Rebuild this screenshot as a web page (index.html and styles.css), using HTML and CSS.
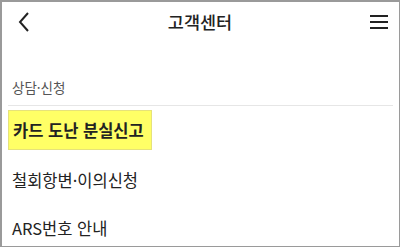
FILE: index.html
```html
<!DOCTYPE html>
<html lang="ko">
<head>
<meta charset="utf-8">
<link rel="stylesheet" href="styles.css">
</head>
<body>
<div class="frame">
  <header class="topbar">
    <svg class="back" width="14" height="22" viewBox="0 0 14 22"><path d="M11 2 L3 11 L11 20" fill="none" stroke="#222" stroke-width="2"/></svg>
    <h1 class="title">고객센터</h1>
    <svg class="menu" width="20" height="16" viewBox="0 0 20 16"><path d="M1 2H19M1 8H19M1 14H19" stroke="#222" stroke-width="2"/></svg>
  </header>
  <div class="section">상담·신청</div>
  <ul class="list">
    <li class="item first"><span class="hl">카드 도난 분실신고</span></li>
    <li class="item">철회항변·이의신청</li>
    <li class="item">ARS번호 안내</li>
  </ul>
</div>
</body>
</html>
```
FILE: styles.css
```css
html, body { margin: 0; padding: 0; background: #fff; }
body { width: 400px; height: 247px; overflow: hidden; font-family: "Noto Sans CJK KR", "Noto Sans", sans-serif; color: #222; }
.frame { box-sizing: border-box; width: 400px; height: 247px; border: 1px solid #9a9a9a; border-top-width: 2px; border-left-width: 2px; padding: 0 6px; }
.topbar { display: flex; align-items: center; justify-content: space-between; height: 40px; padding: 0 4px 0 9px; }
.back { display: block; }
.menu { display: block; }
.title { margin: 0; font-size: 17.5px; font-weight: 500; line-height: 1; }
.section { margin-top: 35px; padding: 0 4px 8px; font-size: 13.5px; color: #555; border-bottom: 1px solid #e6e6e6; line-height: 20px; }
.list { list-style: none; margin: 0; padding: 0; }
.item { height: 48px; display: flex; align-items: center; font-size: 16.5px; padding-left: 4px; }
.item.first { height: 40px; padding-left: 0; margin: 4px 0 6px; align-items: stretch; }
.hl { display: flex; align-items: center; background: #ffff66; border: 1px solid #e6e27a; padding: 0 4px; width: 134px; font-weight: 700; }
```
